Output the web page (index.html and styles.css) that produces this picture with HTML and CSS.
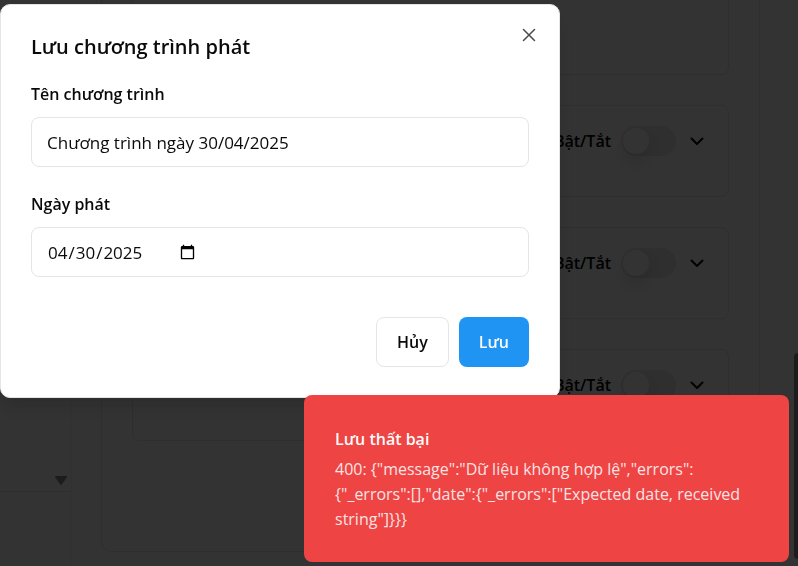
FILE: index.html
```html
<!DOCTYPE html>
<html lang="vi">
<head>
<meta charset="utf-8">
<meta name="viewport" content="width=device-width, initial-scale=1">
<title>Lưu chương trình phát</title>
<link rel="stylesheet" href="styles.css">
</head>
<body>
<div class="page">
  <aside class="sidebar">
    <div class="list">
      <div class="list-scroll">
        <svg width="14" height="11" viewBox="0 0 14 11" aria-hidden="true"><path d="M2 1h10q1.500 0 .8 1.300L8 9.200q-1 1.200-2 0L1.200 2.300Q.5 1 2 1z" fill="#8b8b8b"/></svg>
      </div>
    </div>
  </aside>
  <main class="main">
    <section class="panel">
      <div class="card card-first"></div>
      <div class="card">
        <label class="toggle-row">Bật/Tắt <input class="switch" type="checkbox"></label>
        <button class="expand" type="button" aria-label="Mở rộng"><svg width="22" height="22" viewBox="0 0 22 22" fill="none" stroke="#000" stroke-width="2" stroke-linecap="round" stroke-linejoin="round"><path d="M5.500 8.500l5.500 5.500 5.500-5.500"/></svg></button>
      </div>
      <div class="card">
        <label class="toggle-row">Bật/Tắt <input class="switch" type="checkbox"></label>
        <button class="expand" type="button" aria-label="Mở rộng"><svg width="22" height="22" viewBox="0 0 22 22" fill="none" stroke="#000" stroke-width="2" stroke-linecap="round" stroke-linejoin="round"><path d="M5.500 8.500l5.500 5.500 5.500-5.500"/></svg></button>
      </div>
      <div class="card">
        <label class="toggle-row">Bật/Tắt <input class="switch" type="checkbox"></label>
        <button class="expand" type="button" aria-label="Mở rộng"><svg width="22" height="22" viewBox="0 0 22 22" fill="none" stroke="#000" stroke-width="2" stroke-linecap="round" stroke-linejoin="round"><path d="M5.500 8.500l5.500 5.500 5.500-5.500"/></svg></button>
      </div>
    </section>
  </main>
  <div class="track"><div class="thumb"></div></div>
</div>
<div class="overlay"></div>

<form class="dialog" role="dialog" aria-labelledby="dialog-title">
  <h2 class="title" id="dialog-title">Lưu chương trình phát</h2>
  <div class="field">
    <label for="name">Tên chương trình</label>
    <input class="input" id="name" type="text" value="Chương trình ngày 30/04/2025">
  </div>
  <div class="field">
    <label for="date">Ngày phát</label>
    <input class="input" id="date" type="date" value="2025-04-30">
  </div>
  <div class="actions">
    <button class="btn" type="button">Hủy</button>
    <button class="btn btn-primary" type="submit">Lưu</button>
  </div>
  <button class="close" type="button" aria-label="Đóng"><svg width="20" height="20" viewBox="0 0 20 20" fill="none" stroke="#4a4a4a" stroke-width="1.500" stroke-linecap="round"><path d="M4.500 4.500l11 11M15.500 4.500l-11 11"/></svg></button>
</form>

<div class="toast" role="alert">
  <div class="toast-title">Lưu thất bại</div>
  <div class="toast-text">400: {"message":"Dữ liệu không hợp lệ","errors":<wbr>{"_errors":[],"date":{"_errors":["Expected date, received string"]}}}</div>
</div>
</body>
</html>
```
FILE: styles.css
```css
* { box-sizing: border-box; }

body {
  margin: 0;
  overflow: hidden;
  background: #fff;
  color: #0a0a0a;
  font: 16px/25px "Segoe UI", "Open Sans", "Noto Sans", sans-serif;
}

button, input { font: inherit; color: inherit; margin: 0; }
svg { display: block; }

.page { display: flex; height: 100vh; }

.sidebar { width: 72px; border-right: 1px solid #f5f5f5; }
.list {
  display: flex;
  justify-content: flex-end;
  height: 492px;
  border-bottom: 1px solid #e5e5e5;
}
.list-scroll {
  display: flex;
  align-items: flex-end;
  justify-content: center;
  width: 20px;
  padding-bottom: 5px;
  background: #fcfcfc;
}

.main { flex: 1; padding: 0 29px; }
.panel {
  display: flex;
  flex-direction: column;
  gap: 30px;
  height: 552px;
  padding: 0 30px;
  border: 1px solid #e5e5e5;
  border-top: 0;
  border-radius: 0 0 10px 10px;
}
.card {
  display: flex;
  align-items: flex-start;
  justify-content: flex-end;
  gap: 10px;
  height: 92px;
  padding: 20px;
  border: 1px solid #e5e5e5;
  border-radius: 8px;
}
.card-first { height: 75px; border-top: 0; border-radius: 0 0 8px 8px; }
.toggle-row { display: flex; align-items: center; gap: 10px; height: 30px; font-weight: 600; color: #000; }
.switch {
  appearance: none;
  width: 55px;
  height: 30px;
  padding: 2px;
  border-radius: 15px;
  background: #e8e8e8;
}
.switch::before {
  content: "";
  display: block;
  width: 26px;
  height: 26px;
  border-radius: 50%;
  background: #fff;
  box-shadow: 0 10px 15px rgba(0, 0, 0, .1);
}
.expand { padding: 4px 0; border: 0; background: none; }

.track { display: flex; justify-content: flex-end; width: 9px; background: #fcfcfc; }
.thumb { width: 4px; height: 206px; margin-top: 353px; border-radius: 4px 0 0 4px; background: #8b8b8b; }

.overlay { position: fixed; inset: 0; background: rgba(0, 0, 0, .8); }

.dialog {
  position: fixed;
  top: 4px;
  left: 0;
  width: 560px;
  max-width: 100%;
  padding: 30px;
  border: 1px solid #e5e5e5;
  border-radius: 10px;
  background: #fff;
  box-shadow: 0 12px 18px rgba(0, 0, 0, .12);
}
.title { margin: 0 0 20px; font-size: 20px; line-height: 24px; font-weight: 600; }
.field { margin-bottom: 22px; }
.field label { display: block; margin-bottom: 8px; line-height: 30px; font-weight: 600; }
.input {
  display: flex;
  align-items: center;
  width: 100%;
  height: 50px;
  padding: 0 15px;
  border: 1px solid #e5e5e5;
  border-radius: 8px;
  background: #fff;
  font-size: 17px;
}
.input::-webkit-datetime-edit { flex: none; }
.input::-webkit-calendar-picker-indicator { margin-left: 0; }

.actions { display: flex; justify-content: flex-end; gap: 10px; margin-top: 40px; }
.btn {
  height: 50px;
  padding: 0 20px;
  border: 1px solid #e5e5e5;
  border-radius: 8px;
  background: #fff;
  font-weight: 600;
}
.btn-primary { border: 0; background: #2094f3; color: #f8fafc; }
.close { position: absolute; top: 20px; right: 20px; padding: 0; border: 0; background: none; }

.toast {
  position: fixed;
  right: 9px;
  bottom: 4px;
  width: 485px;
  max-width: 100%;
  padding: 32px 30px 30px 31px;
  border-radius: 8px;
  background: #ef4444;
  color: #fafafa;
}
.toast-title { margin-bottom: 5px; font-weight: 600; }
.toast-text { opacity: .88; }
```
